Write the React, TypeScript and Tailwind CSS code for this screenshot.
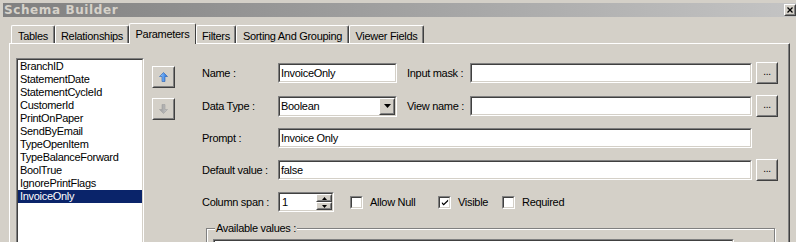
import type { ReactNode } from "react";

const FONT = "font-['Liberation_Sans',Arial,sans-serif] text-[11px] tracking-[-0.3px] text-black";

const FIELDS = [
  "BranchID",
  "StatementDate",
  "StatementCycleId",
  "CustomerId",
  "PrintOnPaper",
  "SendByEmail",
  "TypeOpenItem",
  "TypeBalanceForward",
  "BoolTrue",
  "IgnorePrintFlags",
  "InvoiceOnly",
];

const TABS = [
  { label: "Tables", w: "w-[44px]" },
  { label: "Relationships", w: "w-[74px]" },
  { label: "Parameters", w: "w-[67px]", active: true },
  { label: "Filters", w: "w-[40px]" },
  { label: "Sorting And Grouping", w: "w-[113px]" },
  { label: "Viewer Fields", w: "w-[75px]" },
];

function Sunken({ className, children }: { className: string; children?: ReactNode }) {
  return (
    <div className={`border border-t-[#808080] border-l-[#808080] border-r-white border-b-white ${className}`}>
      <div className="h-full w-full border border-t-[#404040] border-l-[#404040] border-r-[#d4d0c8] border-b-[#d4d0c8] bg-white flex items-center overflow-hidden">
        {children}
      </div>
    </div>
  );
}

function Raised({ className, children }: { className: string; children?: ReactNode }) {
  return (
    <div className={`border border-t-white border-l-white border-r-[#404040] border-b-[#404040] bg-[#d4d0c8] ${className}`}>
      <div className="h-full w-full border border-t-[#d4d0c8] border-l-[#d4d0c8] border-r-[#808080] border-b-[#808080] flex items-center justify-center">
        {children}
      </div>
    </div>
  );
}

function Dots() {
  return <span className="text-[10px] leading-none -mt-[3px]">...</span>;
}

function Check({ checked, label, w }: { checked?: boolean; label: string; w: string }) {
  return (
    <div className={`flex items-center ${w}`}>
      <Sunken className="w-[13px] h-[13px]">
        {checked && (
          <svg width="9" height="9" viewBox="0 0 9 9" className="ml-[1px]">
            <path d="M1 4 L3 6 L8 1 L8 3 L3 8 L1 6 Z" fill="#000" />
          </svg>
        )}
      </Sunken>
      <span className="ml-[7px]">{label}</span>
    </div>
  );
}

function Arrow({ up }: { up?: boolean }) {
  return (
    <svg width="9" height="10" viewBox="0 0 9 10" className={up ? "" : "rotate-180"}>
      <defs>
        <linearGradient id={up ? "ga" : "gb"} x1="0" y1="0" x2="1" y2="0">
          <stop offset="0" stopColor={up ? "#9fd0ff" : "#c8c8c8"} />
          <stop offset="1" stopColor={up ? "#1d6ee0" : "#9a9a9a"} />
        </linearGradient>
      </defs>
      <polygon
        points="4.5,0.5 8.5,4.5 6,4.5 6,9.5 3,9.5 3,4.5 0.5,4.5"
        fill={`url(#${up ? "ga" : "gb"})`}
        stroke={up ? "#2a5fb0" : "#a0a0a0"}
        strokeWidth="0.6"
      />
    </svg>
  );
}

function Label({ w, children }: { w: string; children: ReactNode }) {
  return <span className={`${w} shrink-0`}>{children}</span>;
}

export default function App() {
  return (
    <div className={`w-[796px] h-[242px] overflow-hidden bg-[#d4d0c8] flex flex-col ${FONT}`}>
      {/* title bar */}
      <div className="mt-[3px] ml-[3px] h-[14px] flex items-center justify-between bg-gradient-to-r from-[#808080] to-[#c4c4c4]">
        <span className="ml-[1px] font-['DejaVu_Sans',sans-serif] font-bold text-[12px] tracking-[0.6px] text-[#d6d2ca]">
          Schema Builder
        </span>
        <Raised className="w-[12px] h-[12px]">
          <svg width="6" height="6" viewBox="0 0 6 6">
            <path d="M0.5 0.5 L5.5 5.5 M5.5 0.5 L0.5 5.5" stroke="#000" strokeWidth="1.3" />
          </svg>
        </Raised>
      </div>

      {/* tabs */}
      <div className="mt-[6px] h-[20px] pl-[11px] flex items-end">
        {TABS.map((t) =>
          t.active ? (
            <div
              key={t.label}
              className={`${t.w} h-[21px] -mb-[1px] relative z-10 bg-[#d4d0c8] border-t border-l border-t-white border-l-white border-r border-r-[#404040] rounded-t-[2px] flex items-start justify-center pt-[2px]`}
            >
              {t.label}
            </div>
          ) : (
            <div
              key={t.label}
              className={`${t.w} h-[18px] border-t border-l border-t-white border-l-white border-r border-r-[#404040] shadow-[inset_-1px_0_0_#808080] rounded-t-[2px] flex items-start justify-center pt-[2px]`}
            >
              {t.label}
            </div>
          )
        )}
      </div>

      {/* tab panel */}
      <div className="ml-[9px] w-[781px] flex-1 border-t border-l border-t-white border-l-white border-r border-r-[#404040] shadow-[inset_-1px_0_0_#808080] flex items-start">
        {/* parameter list */}
        <Sunken className="ml-[6px] mt-[14px] w-[128px] h-[200px] shrink-0">
          <div className="self-start w-full flex flex-col">
            {FIELDS.map((f) => (
              <div
                key={f}
                className={`h-[13px] leading-[13px] pl-[2px] whitespace-nowrap ${
                  f === "InvoiceOnly" ? "bg-[#0a246a] text-white" : ""
                }`}
              >
                {f}
              </div>
            ))}
          </div>
        </Sunken>

        {/* move buttons */}
        <div className="ml-[8px] mt-[22px] flex flex-col shrink-0">
          <Raised className="w-[23px] h-[22px]">
            <Arrow up />
          </Raised>
          <Raised className="w-[23px] h-[22px] mt-[10px]">
            <Arrow />
          </Raised>
        </div>

        {/* form */}
        <div className="ml-[27px] mt-[18px] flex flex-col">
          <div className="h-[22px] flex items-center">
            <Label w="w-[76px]">Name :</Label>
            <Sunken className="w-[119px] h-[20px]">
              <span className="pl-[1px]">InvoiceOnly</span>
            </Sunken>
            <Label w="w-[63px] ml-[10px]">Input mask :</Label>
            <Sunken className="w-[282px] h-[20px]" />
            <Raised className="w-[22px] h-[22px] ml-[4px]">
              <Dots />
            </Raised>
          </div>

          <div className="h-[22px] mt-[11px] flex items-center">
            <Label w="w-[76px]">Data Type :</Label>
            <Sunken className="w-[119px] h-[21px]">
              <span className="pl-[1px] flex-1">Boolean</span>
              <Raised className="w-[16px] h-[17px]">
                <svg width="7" height="4" viewBox="0 0 7 4">
                  <path d="M0 0 H7 L3.5 4 Z" fill="#000" />
                </svg>
              </Raised>
            </Sunken>
            <Label w="w-[63px] ml-[10px]">View name :</Label>
            <Sunken className="w-[282px] h-[20px]" />
            <Raised className="w-[22px] h-[22px] ml-[4px]">
              <Dots />
            </Raised>
          </div>

          <div className="h-[22px] mt-[10px] flex items-center">
            <Label w="w-[76px]">Prompt :</Label>
            <Sunken className="w-[474px] h-[20px]">
              <span className="pl-[1px]">Invoice Only</span>
            </Sunken>
          </div>

          <div className="h-[22px] mt-[10px] flex items-center">
            <Label w="w-[76px]">Default value :</Label>
            <Sunken className="w-[474px] h-[20px]">
              <span className="pl-[1px]">false</span>
            </Sunken>
            <Raised className="w-[22px] h-[22px] ml-[4px]">
              <Dots />
            </Raised>
          </div>

          <div className="h-[22px] mt-[10px] flex items-center">
            <Label w="w-[76px]">Column span :</Label>
            <Sunken className="w-[56px] h-[20px]">
              <span className="pl-[2px] flex-1">1</span>
              <div className="flex flex-col h-full">
                <Raised className="w-[16px] h-[8px]">
                  <svg width="5" height="3" viewBox="0 0 5 3">
                    <path d="M0 3 H5 L2.5 0 Z" fill="#000" />
                  </svg>
                </Raised>
                <Raised className="w-[16px] h-[8px]">
                  <svg width="5" height="3" viewBox="0 0 5 3">
                    <path d="M0 0 H5 L2.5 3 Z" fill="#000" />
                  </svg>
                </Raised>
              </div>
            </Sunken>
            <div className="ml-[16px] flex items-center">
              <Check label="Allow Null" w="w-[88px]" />
              <Check label="Visible" checked w="w-[64px]" />
              <Check label="Required" w="w-[80px]" />
            </div>
          </div>

          <fieldset className="ml-[4px] mt-[9px] w-[569px] h-[60px] border border-[#808080] shadow-[inset_1px_1px_0_#fff,1px_1px_0_#fff] pl-[6px]">
            <legend className="ml-[2px] px-[1px] leading-[13px] bg-[#d4d0c8]">Available values :</legend>
            <Sunken className="mt-[4px] w-[521px] h-[40px]" />
          </fieldset>
        </div>
      </div>
    </div>
  );
}
